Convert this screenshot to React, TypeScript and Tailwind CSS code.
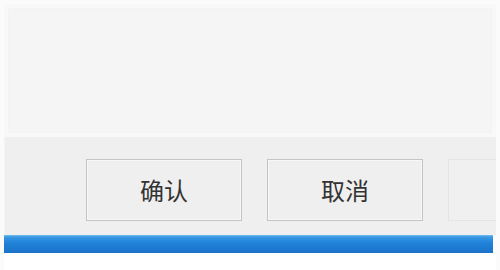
import React from "react";

function Btn({ label, faint }: { label?: string; faint?: boolean }) {
  return (
    <div
      className={
        faint
          ? "w-[156px] h-[62px] shrink-0 border border-[#e4e4e4] bg-[#f0f0f0]"
          : "w-[156px] h-[62px] shrink-0 border border-[#c4c4c4] bg-[#efefef] shadow-[inset_0_0_0_1px_#f7f7f7] flex items-center justify-center"
      }
    >
      {label && (
        <span className="text-[24px] leading-none text-[#333333] [font-family:'Noto_Sans_CJK_SC',sans-serif]">
          {label}
        </span>
      )}
    </div>
  );
}

export default function App() {
  return (
    <div className="w-[500px] h-[270px] bg-[#fbfbfb] flex flex-col pt-[4px] px-[4px] overflow-hidden">
      <div className="h-[133px] bg-[#f8f8f8] p-[4px]">
        <div className="h-full bg-[#f5f5f5] border border-[#f3f3f3]" />
      </div>
      <div className="h-[98px] bg-[#efefef] pt-[22px] pl-[81px] flex gap-[25px] overflow-hidden border-l border-[#f4f4f4]">
        <Btn label="确认" />
        <Btn label="取消" />
        <Btn faint />
      </div>
      <div className="h-[18px] mr-[3px] bg-[linear-gradient(to_bottom,#74c0ef_0px,#3a98e4_2px,#1f82d8_45%,#1a72c8_100%)]" />
      <div className="flex-1 bg-white" />
    </div>
  );
}
